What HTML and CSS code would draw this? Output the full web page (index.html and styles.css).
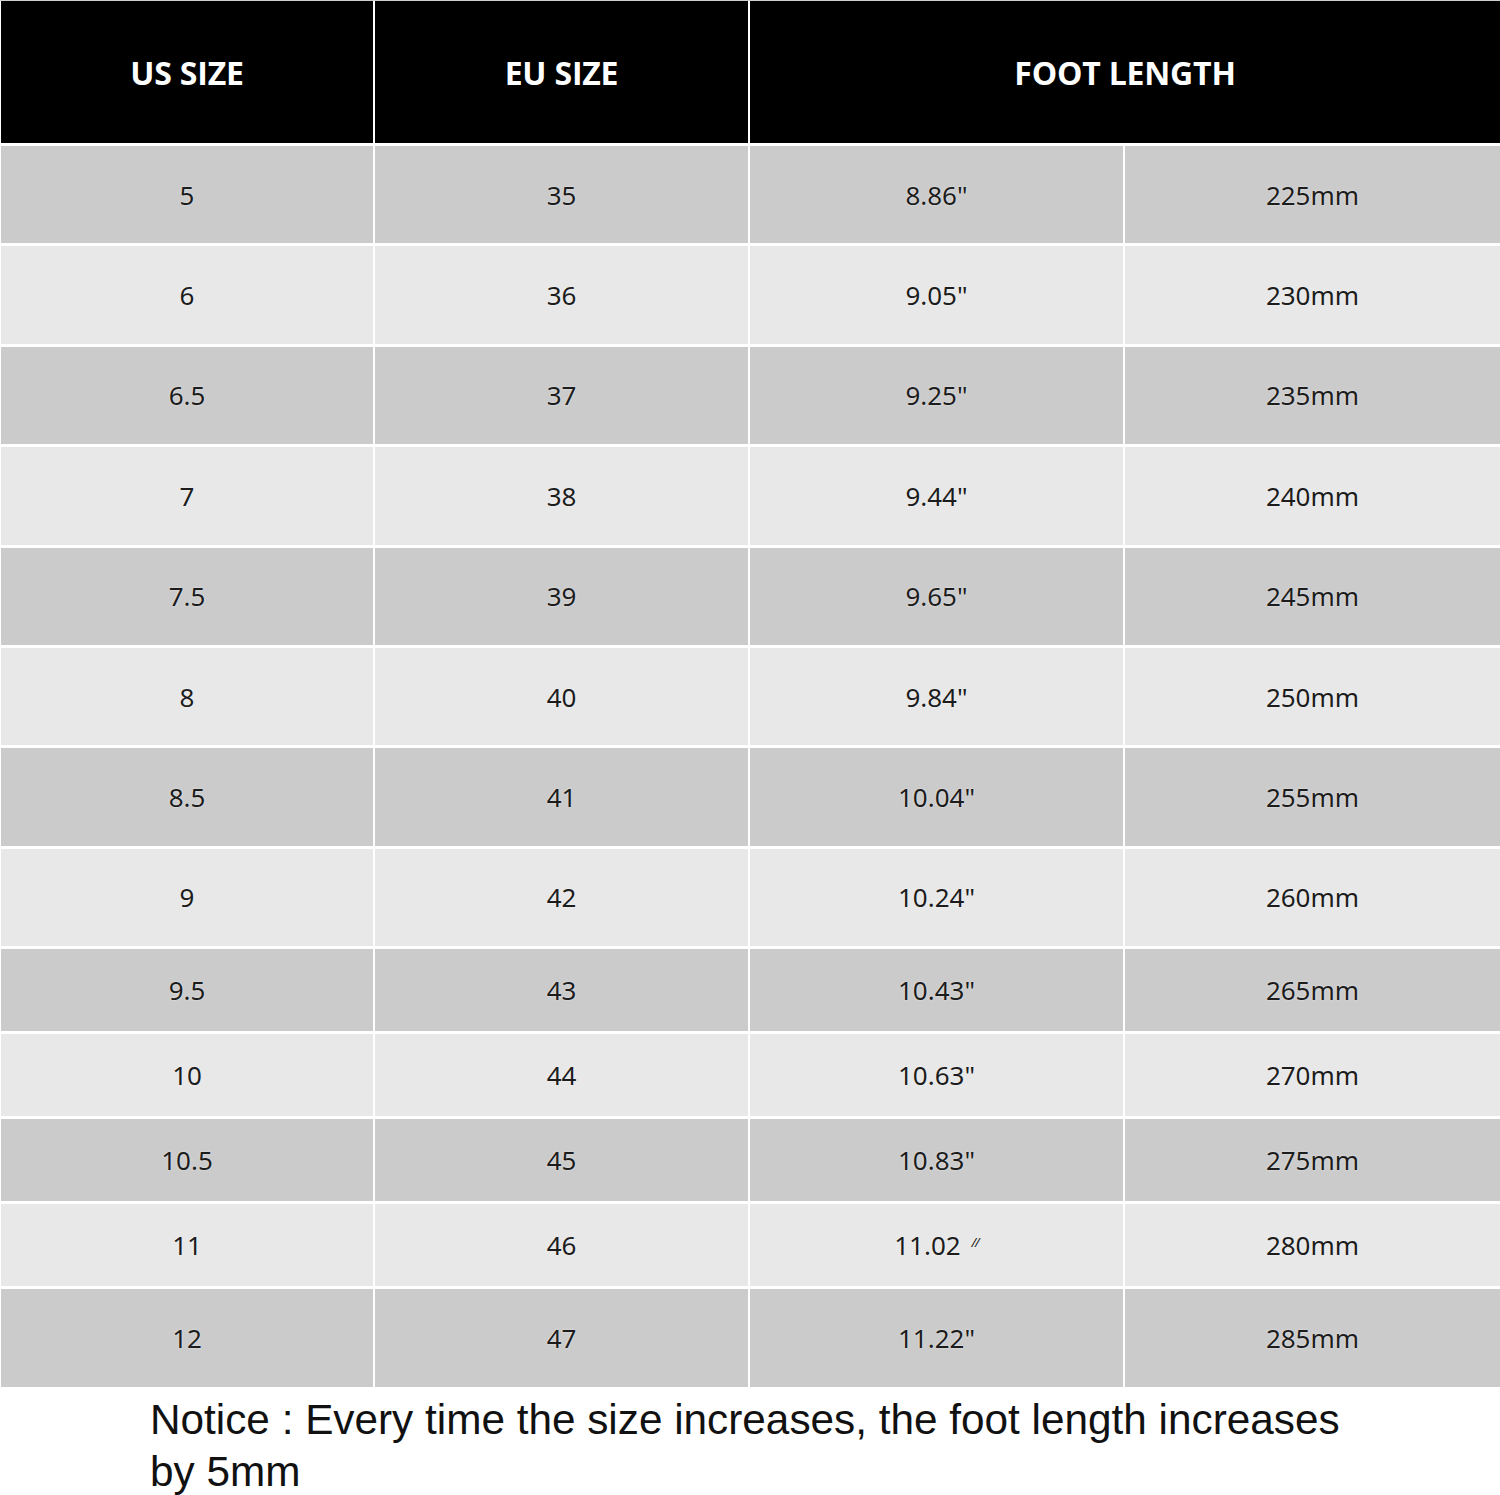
FILE: index.html
```html
<!DOCTYPE html>
<html lang="en">
<head>
<meta charset="utf-8">
<title>Size Chart</title>
<link rel="stylesheet" href="styles.css">
</head>
<body>
<div class="chart">
  <div class="hd">US SIZE</div>
  <div class="hd">EU SIZE</div>
  <div class="hd span2">FOOT LENGTH</div>

  <div class="c dark">5</div><div class="c dark">35</div><div class="c dark">8.86"</div><div class="c dark">225mm</div>
  <div class="c light">6</div><div class="c light">36</div><div class="c light">9.05"</div><div class="c light">230mm</div>
  <div class="c dark">6.5</div><div class="c dark">37</div><div class="c dark">9.25"</div><div class="c dark">235mm</div>
  <div class="c light">7</div><div class="c light">38</div><div class="c light">9.44"</div><div class="c light">240mm</div>
  <div class="c dark">7.5</div><div class="c dark">39</div><div class="c dark">9.65"</div><div class="c dark">245mm</div>
  <div class="c light">8</div><div class="c light">40</div><div class="c light">9.84"</div><div class="c light">250mm</div>
  <div class="c dark">8.5</div><div class="c dark">41</div><div class="c dark">10.04"</div><div class="c dark">255mm</div>
  <div class="c light">9</div><div class="c light">42</div><div class="c light">10.24"</div><div class="c light">260mm</div>
  <div class="c dark">9.5</div><div class="c dark">43</div><div class="c dark">10.43"</div><div class="c dark">265mm</div>
  <div class="c light">10</div><div class="c light">44</div><div class="c light">10.63"</div><div class="c light">270mm</div>
  <div class="c dark">10.5</div><div class="c dark">45</div><div class="c dark">10.83"</div><div class="c dark">275mm</div>
  <div class="c light">11</div><div class="c light">46</div><div class="c light">11.02 <span class="ditto">//</span></div><div class="c light">280mm</div>
  <div class="c dark">12</div><div class="c dark">47</div><div class="c dark">11.22"</div><div class="c dark">285mm</div>
</div>
<p class="notice">Notice : Every time the size increases, the foot length increases by 5mm</p>
</body>
</html>
```
FILE: styles.css
```css
html, body {
  margin: 0;
  padding: 0;
  background: #fff;
}

.chart {
  display: grid;
  grid-template-columns: 372px 373px 373px 1fr;
  grid-template-rows: 142px repeat(8, 97.4px) repeat(4, 82px) 98px;
  column-gap: 2px;
  row-gap: 3px;
  padding-left: 1px;
  border-top: 1px solid #cfcfcf;
  background: #fff;
}

.hd {
  background: #000;
  color: #fff;
  font-family: "Open Sans", "Noto Sans", sans-serif;
  font-weight: 700;
  font-size: 32px;
  display: flex;
  align-items: center;
  justify-content: center;
  letter-spacing: -0.2px;
}

.span2 {
  grid-column: span 2;
}

.c {
  display: flex;
  align-items: center;
  justify-content: center;
  font-family: "Noto Sans", "Open Sans", sans-serif;
  font-size: 26px;
  color: #1c1c1c;
  text-shadow: 0 0 2px rgba(255, 255, 255, 0.7);
  white-space: pre;
}

.dark {
  background: #cbcbcb;
}

.light {
  background: #e8e8e8;
}

.ditto {
  font-size: 13px;
  font-style: italic;
  letter-spacing: -1px;
  margin-left: 4px;
  position: relative;
  top: -3px;
}

.notice {
  margin: 7px 0 0 0;
  padding-left: 150px;
  width: 1220px;
  font-family: "Liberation Sans", Arial, sans-serif;
  font-size: 42.3px;
  line-height: 52px;
  color: #111;
}
```
